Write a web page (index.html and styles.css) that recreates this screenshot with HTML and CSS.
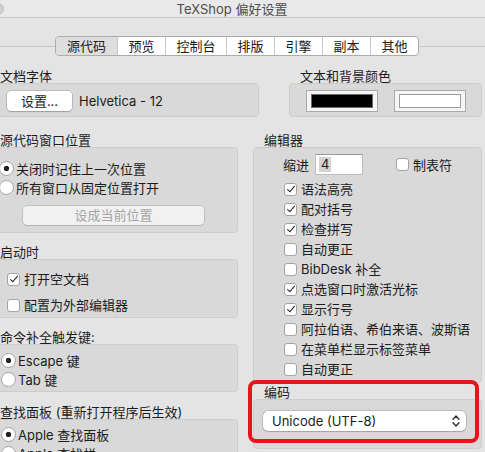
FILE: index.html
```html
<!DOCTYPE html>
<html lang="zh-CN">
<head>
<meta charset="utf-8">
<title>TeXShop 偏好设置</title>
<link rel="stylesheet" href="styles.css">
</head>
<body>
<div class="window">
  <header class="titlebar">
    <span class="light"></span>
    <span class="title">TeXShop 偏好设置</span>
  </header>

  <nav class="tabbar">
    <div class="seg">
      <span class="tab w61 sel">源代码</span>
      <span class="tab">预览</span>
      <span class="tab w61">控制台</span>
      <span class="tab">排版</span>
      <span class="tab">引擎</span>
      <span class="tab">副本</span>
      <span class="tab">其他</span>
    </div>
  </nav>

  <div class="row1">
    <section class="sec font-sec">
      <div class="lbl">文档字体</div>
      <div class="box font-box">
        <span class="btn">设置...</span>
        <span class="fontname">Helvetica - 12</span>
      </div>
    </section>
    <section class="sec color-sec">
      <div class="lbl">文本和背景颜色</div>
      <div class="box color-box">
        <span class="well"><span class="swatch black"></span></span>
        <span class="well"><span class="swatch white"></span></span>
      </div>
    </section>
  </div>

  <div class="cols">
    <div class="col left">
      <section class="sec">
        <div class="lbl">源代码窗口位置</div>
        <div class="box pos-box">
          <div class="opt"><span class="radio on"></span><span>关闭时记住上一次位置</span></div>
          <div class="opt"><span class="radio"></span><span>所有窗口从固定位置打开</span></div>
          <span class="btn wide disabled">设成当前位置</span>
        </div>
      </section>
      <section class="sec s2">
        <div class="lbl">启动时</div>
        <div class="box start-box">
          <div class="opt r20"><span class="cb on"></span><span>打开空文档</span></div>
          <div class="opt r20"><span class="cb"></span><span>配置为外部编辑器</span></div>
        </div>
      </section>
      <section class="sec s3">
        <div class="lbl">命令补全触发键:</div>
        <div class="box key-box">
          <div class="opt"><span class="radio on"></span><span>Escape 键</span></div>
          <div class="opt"><span class="radio"></span><span>Tab 键</span></div>
        </div>
      </section>
      <section class="sec s4">
        <div class="lbl">查找面板 (重新打开程序后生效)</div>
        <div class="box find-box">
          <div class="opt"><span class="radio on"></span><span>Apple 查找面板</span></div>
          <div class="opt"><span class="radio"></span><span>Apple 查找栏</span></div>
        </div>
      </section>
    </div>

    <div class="col right">
      <section class="sec">
        <div class="lbl">编辑器</div>
        <div class="box editor-box">
          <div class="indent-row">
            <span>缩进</span>
            <span class="field"><span class="selected">4</span></span>
            <span class="cb tabcb"></span><span class="tabtxt">制表符</span>
          </div>
          <div class="checks">
            <div class="opt r20"><span class="cb on"></span><span>语法高亮</span></div>
            <div class="opt r20"><span class="cb on"></span><span>配对括号</span></div>
            <div class="opt r20"><span class="cb on"></span><span>检查拼写</span></div>
            <div class="opt r20"><span class="cb"></span><span>自动更正</span></div>
            <div class="opt r20"><span class="cb"></span><span>BibDesk 补全</span></div>
            <div class="opt r20"><span class="cb on"></span><span>点选窗口时激活光标</span></div>
            <div class="opt r20"><span class="cb on"></span><span>显示行号</span></div>
            <div class="opt r20"><span class="cb"></span><span>阿拉伯语、希伯来语、波斯语</span></div>
            <div class="opt r20"><span class="cb"></span><span>在菜单栏显示标签菜单</span></div>
            <div class="opt r20"><span class="cb"></span><span>自动更正</span></div>
          </div>
        </div>
      </section>
      <section class="sec enc">
        <div class="lbl">编码</div>
        <div class="box enc-box">
          <div class="popup">
            <span>Unicode (UTF-8)</span>
            <svg class="updown" width="8" height="14" viewBox="0 0 8 14" aria-hidden="true">
              <path d="M1 5.2 L4 2 L7 5.2" fill="none" stroke="#2a2a2a" stroke-width="1.3" stroke-linecap="round" stroke-linejoin="round"/>
              <path d="M1 8.8 L4 12 L7 8.8" fill="none" stroke="#2a2a2a" stroke-width="1.3" stroke-linecap="round" stroke-linejoin="round"/>
            </svg>
          </div>
        </div>
      </section>
    </div>
  </div>

  <div class="highlight"></div>
</div>
</body>
</html>
```

FILE: styles.css
```css
* { box-sizing: border-box; }

html, body {
  margin: 0;
  padding: 0;
}

body {
  width: 485px;
  height: 452px;
  overflow: hidden;
  background: #e4e4e4;
  font-family: "Inter", "Noto Sans CJK SC", sans-serif;
  font-size: 13px;
  line-height: 16px;
  color: #1c1c1c;
}

.window {
  position: relative;
  width: 485px;
  height: 452px;
}

/* title bar */
.titlebar {
  height: 18px;
  display: flex;
  align-items: center;
  background: #e9e9e9;
  border-bottom: 1px solid #c6c6c6;
  padding-right: 25px;
}

.light {
  flex: none;
  width: 12px;
  height: 12px;
  margin-left: -8px;
  border-radius: 50%;
  background: #cfcfcf;
  border: 1px solid #c0c0c0;
}

.title {
  flex: 1;
  text-align: center;
  color: #4d4d4d;
  white-space: nowrap;
}

/* segmented tabs */
.tabbar {
  display: flex;
  align-items: center;
  margin-top: 18px;
  height: 20px;
}

.tabbar::before {
  content: "";
  width: 55px;
  height: 1px;
  background: #c9c9c9;
}

.tabbar::after {
  content: "";
  flex: 1;
  height: 1px;
  background: #c9c9c9;
}

.seg {
  display: flex;
  height: 20px;
  border: 1px solid #acacac;
  border-radius: 4px;
  background: #fff;
  overflow: hidden;
}

.tab {
  width: 48px;
  text-align: center;
  line-height: 18px;
  border-left: 1px solid #c6c6c6;
  white-space: nowrap;
}

.tab:first-child { border-left: 0; }
.tab.w61 { width: 61px; }
.tab.sel { background: #dedede; }

/* sections */
.sec .lbl {
  height: 14px;
  line-height: 14px;
  padding-left: 11px;
  white-space: nowrap;
}

.box {
  background: #d9d9d9;
  border: 1px solid #cdcdcd;
  border-radius: 4px;
}

.row1 {
  display: flex;
  margin-top: 13px;
  margin-left: -11px;
}

.font-sec { width: 270px; flex: none; }
.color-sec { width: 193px; flex: none; margin-left: 30px; }

.font-box {
  height: 34px;
  display: flex;
  align-items: center;
  padding: 2px 0 0 17px;
}

.btn {
  display: inline-block;
  width: 65px;
  height: 20px;
  line-height: 20px;
  text-align: center;
  background: #fff;
  border-radius: 4px;
  box-shadow: 0 0 0 0.5px rgba(0, 0, 0, 0.28), 0 1px 1px rgba(0, 0, 0, 0.14);
  white-space: nowrap;
}

.fontname { margin-left: 7px; white-space: nowrap; }

.color-box {
  height: 34px;
  display: flex;
  align-items: center;
  gap: 16px;
  padding: 2px 0 0 16px;
}

.well {
  display: block;
  width: 72px;
  height: 22px;
  padding: 3px 4px;
  background: #f5f5f5;
  border: 1px solid #a9a9a9;
}

.swatch {
  display: block;
  height: 100%;
}

.swatch.black { background: #000; border: 1px solid #6a6a6a; }
.swatch.white { background: #fff; border: 1px solid #9c9c9c; }

/* columns */
.cols {
  display: flex;
  margin-top: 16px;
  margin-left: -11px;
}

.col.left { width: 249px; flex: none; }
.col.right { width: 229px; flex: none; margin-left: 15px; }

.opt {
  display: flex;
  align-items: center;
  height: 19px;
  white-space: nowrap;
}

.opt.r20 { height: 20px; }

.radio {
  flex: none;
  width: 15px;
  height: 15px;
  margin-right: 2px;
  border-radius: 50%;
  border: 1px solid #a3a3a3;
  background: #fff;
}

.radio.on {
  background: radial-gradient(circle, #222 0 2.4px, #fff 3px);
}

.cb {
  flex: none;
  position: relative;
  width: 13px;
  height: 13px;
  margin-right: 4px;
  border-radius: 3px;
  border: 1px solid #a3a3a3;
  background: #fff;
}

.cb.on::after {
  content: "";
  position: absolute;
  left: 3.5px;
  top: 0.5px;
  width: 3px;
  height: 7px;
  border: solid #1e1e1e;
  border-width: 0 1.6px 1.6px 0;
  transform: rotate(40deg);
}

.pos-box {
  height: 86px;
  padding: 11px 0 0 9px;
}

.btn.wide {
  width: 181px;
  height: 19px;
  line-height: 19px;
  margin: 9px 0 0 24px;
  background: #f1f1f1;
  box-shadow: 0 0 0 0.5px rgba(0, 0, 0, 0.22), 0 1px 1px rgba(0, 0, 0, 0.08);
}

.btn.disabled { color: #a4a4a4; }

.s2 { margin-top: 12px; }
.start-box {
  height: 59px;
  padding: 9px 0 0 17px;
  display: flex;
  flex-direction: column;
  gap: 6px;
}

.s3 { margin-top: 12px; }
.key-box {
  height: 48px;
  padding: 6px 0 0 11px;
}

.s4 { margin-top: 13px; }
.find-box {
  height: 60px;
  padding: 5px 0 0 11px;
}

/* editor */
.editor-box {
  height: 236px;
  padding: 6px 0 0 29px;
}

.indent-row {
  display: flex;
  align-items: center;
  height: 21px;
  white-space: nowrap;
}

.field {
  width: 48px;
  height: 21px;
  margin-left: 6px;
  padding: 2px 3px;
  background: #fff;
  border: 1px solid #bdbdbd;
  border-top-color: #9a9a9a;
  display: flex;
}

.selected {
  display: block;
  padding: 0 2px;
  line-height: 15px;
  background: #d3d3d3;
}

.tabcb { margin-left: 33px; }

.checks {
  margin-top: 4px;
  padding-left: 1px;
}

.enc { margin-top: 2px; }
.enc .lbl { line-height: 14px; }

.enc-box {
  height: 50px;
  padding: 11px 0 0 9px;
}

.popup {
  width: 203px;
  height: 20px;
  display: flex;
  align-items: center;
  justify-content: space-between;
  padding: 0 6px 0 9px;
  background: #fff;
  border-radius: 5px;
  box-shadow: 0 0 0 0.5px rgba(0, 0, 0, 0.25), 0 1px 1px rgba(0, 0, 0, 0.14);
  white-space: nowrap;
}

.updown { display: block; }

/* red annotation frame */
.highlight {
  position: absolute;
  left: 248px;
  top: 380px;
  width: 231px;
  height: 63px;
  border: 4px solid #e3161c;
  border-radius: 8px;
}
```
